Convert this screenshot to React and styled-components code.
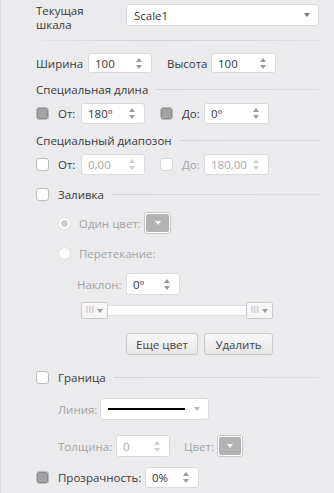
import React from "react";
import styled, { createGlobalStyle } from "styled-components";

const Global = createGlobalStyle`
  html, body { margin: 0; padding: 0; background: #ebebed; }
  body { font-family: "Open Sans", "Noto Sans", sans-serif; font-size: 11px; color: #3a3a3a; }
  * { box-sizing: border-box; }
`;

const Panel = styled.div`
  width: 334px;
  height: 493px;
  background: #ebebed;
  border-left: 1px solid #dfdfe1;
  padding: 0 14px 0 35px;
  display: flex;
  flex-direction: column;
  overflow: hidden;
`;

const Row = styled.div`
  display: flex;
  align-items: center;
  margin-top: ${(p) => p.$mt || 0}px;
  padding-left: ${(p) => p.$indent || 0}px;
  height: ${(p) => p.$h || 21}px;
  flex: none;
`;

const TopRow = styled.div`
  display: flex;
  align-items: flex-start;
  margin-top: 4px;
  flex: none;
`;

const TwoLineLabel = styled.div`
  width: 90px;
  line-height: 14px;
  font-size: 11.5px;
`;

const Label = styled.span`
  width: ${(p) => p.$w}px;
  margin-left: ${(p) => p.$ml || 0}px;
  font-size: 11.5px;
  color: ${(p) => (p.$disabled ? "#a3a3a5" : "#3a3a3a")};
  white-space: nowrap;
  flex: none;
`;

const Select = styled.div`
  width: ${(p) => p.$w}px;
  height: 22px;
  background: #fff;
  border: 1px solid #d9d9db;
  border-radius: 3px;
  display: flex;
  align-items: center;
  padding: 0 8px 0 7px;
  font-size: 11.5px;
  color: #333;
  flex: none;
`;

const Caret = styled.span`
  margin-left: auto;
  width: 0;
  height: 0;
  border-left: 3.5px solid transparent;
  border-right: 3.5px solid transparent;
  border-top: 4px solid ${(p) => p.$color || "#777"};
`;

const ThumbCaret = styled.span`
  width: 0;
  height: 0;
  margin-left: 1px;
  border-left: 3.5px solid transparent;
  border-right: 3.5px solid transparent;
  border-top: 4px solid #9c9c9e;
`;

const Divider = styled.div`
  height: 1px;
  flex: none;
  margin-top: ${(p) => p.$mt || 0}px;
  background: linear-gradient(to right, #e4e4e6, #d2d2d4 40%, #e0e0e2);
`;

const SectionHead = styled.div`
  display: flex;
  align-items: center;
  flex: none;
  margin-top: ${(p) => p.$mt || 0}px;
  height: 16px;
  font-size: 11.5px;
  color: #3a3a3a;
`;

const HeadLine = styled.div`
  flex: 1;
  height: 1px;
  margin-left: 8px;
  background: linear-gradient(to right, #d2d2d4, #dcdcde);
`;

const SpinBox = styled.div`
  width: ${(p) => p.$w}px;
  height: ${(p) => p.$h || 21}px;
  background: #fff;
  border: 1px solid #dadadc;
  border-radius: 3px;
  display: flex;
  align-items: center;
  padding: 0 9px 0 6px;
  font-size: 11.5px;
  color: ${(p) => (p.$disabled ? "#a8a8aa" : "#333")};
  flex: none;
  overflow: hidden;
  white-space: nowrap;
`;

const SpinValue = styled.span`
  flex: 1;
  overflow: hidden;
`;

const Arrows = styled.span`
  display: flex;
  flex-direction: column;
  gap: 3px;
  margin-left: 4px;
  flex: none;
`;

const ArrowUp = styled.span`
  width: 0;
  height: 0;
  border-left: 3.5px solid transparent;
  border-right: 3.5px solid transparent;
  border-bottom: 4px solid ${(p) => (p.$disabled ? "#cfcfd1" : "#9a9a9c")};
`;
const ArrowDown = styled.span`
  width: 0;
  height: 0;
  border-left: 3.5px solid transparent;
  border-right: 3.5px solid transparent;
  border-top: 4px solid ${(p) => (p.$disabled ? "#cfcfd1" : "#9a9a9c")};
`;

const Check = styled.span`
  width: 13px;
  height: 13px;
  flex: none;
  border: 1px solid ${(p) => (p.$disabled ? "#d6d6d8" : "#bdbdbf")};
  border-radius: 3px;
  background: #fff;
  display: flex;
  align-items: center;
  justify-content: center;
  margin-left: ${(p) => p.$ml || 0}px;
  margin-right: 9px;
  &::after {
    content: "";
    display: ${(p) => (p.$checked ? "block" : "none")};
    width: 9px;
    height: 9px;
    border-radius: 2px;
    background: #a3a3a5;
    border: 1px solid #8c8c8e;
  }
`;

const Radio = styled.span`
  width: 13px;
  height: 13px;
  flex: none;
  border-radius: 50%;
  border: 1px solid #dcdcde;
  background: #fff;
  display: flex;
  align-items: center;
  justify-content: center;
  margin-right: 8px;
  &::after {
    content: "";
    display: ${(p) => (p.$checked ? "block" : "none")};
    width: 7px;
    height: 7px;
    border-radius: 50%;
    background: #d0d0d2;
  }
`;

const ColorButton = styled.span`
  width: ${(p) => p.$w || 27}px;
  height: 22px;
  flex: none;
  border: 1px solid #c8c8ca;
  border-radius: 3px;
  padding: 1px;
  background: #fff;
  display: flex;
`;

const ColorFill = styled.span`
  flex: 1;
  background: #b3b3b5;
  border-radius: 2px;
  display: flex;
  align-items: center;
  justify-content: center;
`;

const WhiteCaret = styled.span`
  width: 0;
  height: 0;
  border-left: 3.5px solid transparent;
  border-right: 3.5px solid transparent;
  border-top: 4px solid #fff;
`;

const Slider = styled.div`
  display: flex;
  align-items: center;
  flex: none;
  margin-top: 7px;
  margin-left: 45px;
  width: 192px;
  height: 17px;
`;

const Thumb = styled.span`
  width: 27px;
  height: 17px;
  flex: none;
  border: 1px solid #cbcbcd;
  border-radius: 2px;
  background: #f6f6f7;
  display: flex;
  align-items: center;
  justify-content: center;
  gap: 2px;
  font-size: 8px;
  color: #b4b4b6;
  letter-spacing: 0.5px;
  font-family: "DejaVu Sans", sans-serif;
`;

const Track = styled.span`
  flex: 1;
  height: 11px;
  background: #fff;
  border-top: 1px solid #dcdcde;
  border-bottom: 1px solid #dcdcde;
`;

const ButtonRow = styled.div`
  display: flex;
  flex: none;
  gap: 6px;
  margin-top: 14px;
  margin-left: 90px;
`;

const Button = styled.button`
  width: ${(p) => p.$w}px;
  height: 22px;
  border: 1px solid #c9c9cb;
  border-radius: 3px;
  background: linear-gradient(#f8f8f8, #e6e6e7);
  font-family: "Open Sans", "Noto Sans", sans-serif;
  font-size: 11.5px;
  color: #444;
  padding: 0;
`;

const LineSample = styled.span`
  width: 77px;
  height: 2px;
  background: #000;
  flex: none;
`;

function Spin({ w, value, disabled, h }) {
  return (
    <SpinBox $w={w} $disabled={disabled} $h={h}>
      <SpinValue>{value}</SpinValue>
      <Arrows>
        <ArrowUp $disabled={disabled} />
        <ArrowDown $disabled={disabled} />
      </Arrows>
    </SpinBox>
  );
}

function ColorBtn({ w }) {
  return (
    <ColorButton $w={w}>
      <ColorFill>
        <WhiteCaret />
      </ColorFill>
    </ColorButton>
  );
}

export default function App() {
  return (
    <>
      <Global />
      <Panel>
        <TopRow>
          <TwoLineLabel>
            Текущая
            <br />
            шкала
          </TwoLineLabel>
          <Select $w={193}>
            Scale1
            <Caret />
          </Select>
        </TopRow>
        <Divider $mt={8} />

        <Row $mt={12} $h={20}>
          <Label $w={52}>Ширина</Label>
          <Spin w={64} value="100" h={20} />
          <Label $w={44} $ml={15}>Высота</Label>
          <Spin w={65} value="100" h={20} />
        </Row>

        <SectionHead $mt={8}>
          Специальная длина
          <HeadLine />
        </SectionHead>
        <Row $mt={6}>
          <Check $checked />
          <Label $w={23}>От:</Label>
          <Spin w={64} value="180°" />
          <Check $checked $ml={15} />
          <Label $w={22}>До:</Label>
          <Spin w={65} value="0°" />
        </Row>

        <SectionHead $mt={8}>
          Специальный диапозон
          <HeadLine />
        </SectionHead>
        <Row $mt={6}>
          <Check />
          <Label $w={23}>От:</Label>
          <Spin w={64} value="0,00" disabled />
          <Check $disabled $ml={15} />
          <Label $w={22} $disabled>До:</Label>
          <Spin w={65} value="180,00" disabled />
        </Row>

        <SectionHead $mt={11}>
          <Check />
          Заливка
          <HeadLine />
        </SectionHead>

        <Row $mt={10} $h={22} $indent={22}>
          <Radio $checked />
          <Label $w={65} $disabled>Один цвет:</Label>
          <ColorBtn w={27} />
        </Row>
        <Row $mt={8} $h={22} $indent={22}>
          <Radio />
          <Label $w={80} $disabled>Перетекание:</Label>
        </Row>

        <Row $mt={9} $h={22} $indent={41}>
          <Label $w={49} $disabled>Наклон:</Label>
          <Spin w={54} value="0°" h={22} />
        </Row>

        <Slider>
          <Thumb>
            III
            <ThumbCaret />
          </Thumb>
          <Track />
          <Thumb>
            III
            <ThumbCaret />
          </Thumb>
        </Slider>

        <ButtonRow>
          <Button $w={72}>Еще цвет</Button>
          <Button $w={69}>Удалить</Button>
        </ButtonRow>

        <SectionHead $mt={14}>
          <Check />
          Граница
          <HeadLine />
        </SectionHead>

        <Row $mt={13} $h={22} $indent={22}>
          <Label $w={42} $disabled>Линия:</Label>
          <Select $w={109}>
            <LineSample />
            <Caret $color="#bbb" />
          </Select>
        </Row>

        <Row $mt={15} $h={22} $indent={22}>
          <Label $w={58} $disabled>Толщина:</Label>
          <Spin w={54} value="0" disabled h={22} />
          <Label $w={33} $ml={14} $disabled>Цвет:</Label>
          <ColorBtn w={26} />
        </Row>

        <Row $mt={10} $h={21}>
          <Check $checked />
          <Label $w={87}>Прозрачность:</Label>
          <Spin w={54} value="0%" h={21} />
        </Row>
      </Panel>
    </>
  );
}
